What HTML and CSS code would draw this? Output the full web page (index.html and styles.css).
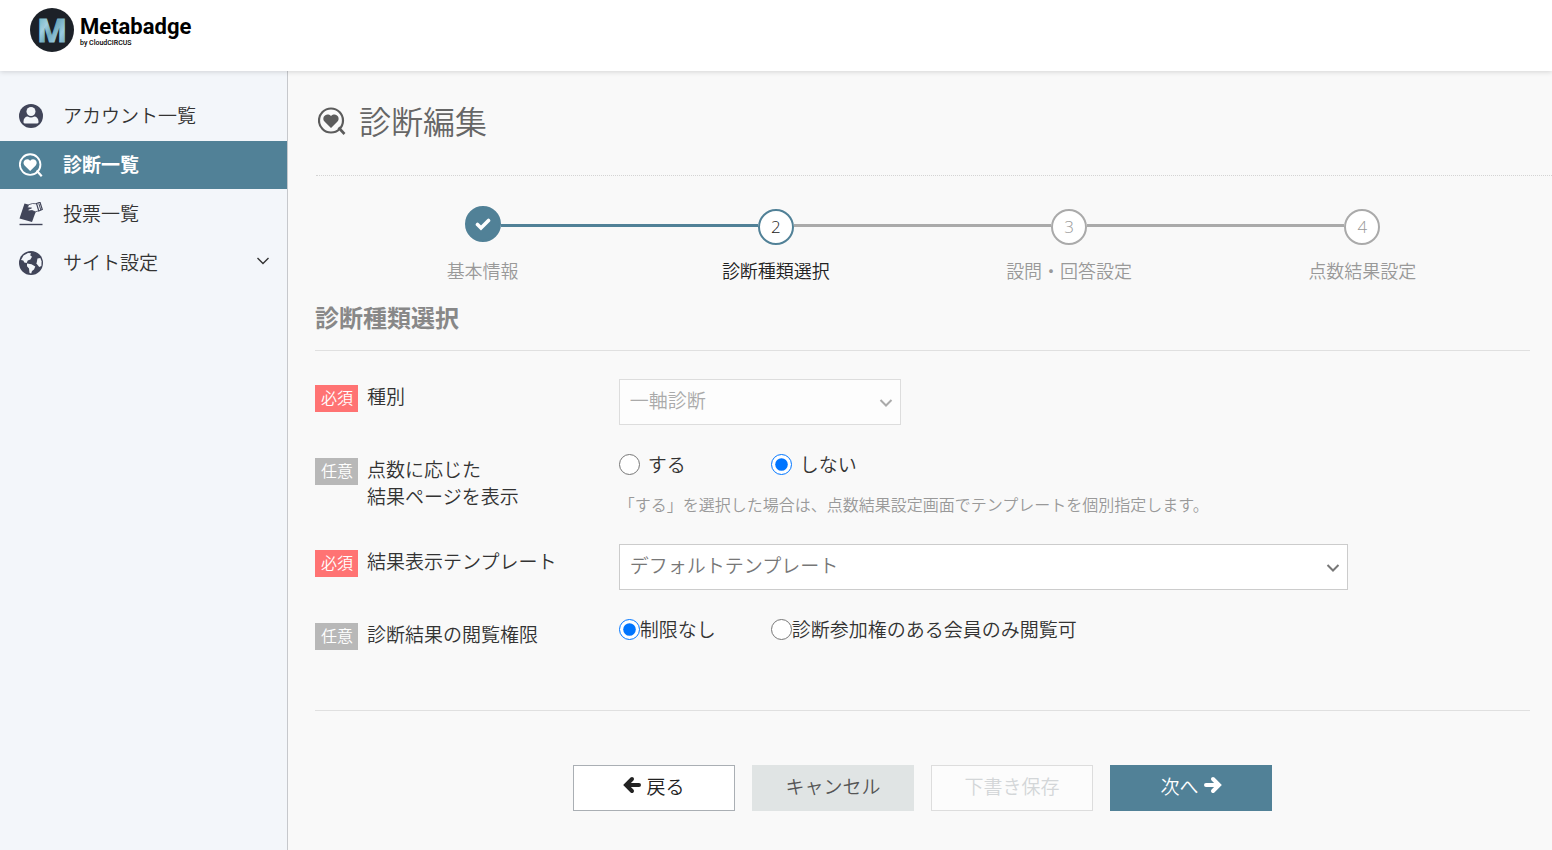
FILE: index.html
```html
<!DOCTYPE html>
<html lang="ja">
<head>
<meta charset="utf-8">
<title>診断編集 | Metabadge</title>
<link rel="stylesheet" href="styles.css">
</head>
<body>
<svg class="sprite" aria-hidden="true">
  <symbol id="icon-heart" viewBox="0 0 28 28">
    <circle cx="13" cy="13.500" r="12" fill="none" stroke="currentColor" stroke-width="2.200"/>
    <path d="M20.500 20.500l6 6.500" stroke="currentColor" stroke-width="2.600"/>
    <path d="M13 21l-6.500-6.500c-3.600-4.200 2-9.800 6.500-5.600 4.500-4.200 10.100 1.400 6.500 5.600z" fill="currentColor"/>
  </symbol>
  <symbol id="icon-chevron" viewBox="0 0 14 10">
    <path d="M1.500 2l5.500 5.500L12.500 2" fill="none" stroke="currentColor"/>
  </symbol>
  <symbol id="icon-arrow" viewBox="0 0 18 18">
    <path d="M2 9H14.500M9 3l6 6-6 6" fill="none" stroke="currentColor" stroke-width="4" stroke-linecap="round"/>
  </symbol>
</svg>

<header class="header">
  <a class="brand" href="#">
    <svg class="brand-mark" viewBox="0 0 44 44" aria-hidden="true">
      <defs>
        <linearGradient id="facet" x1="0" y1="0" x2="1" y2="1">
          <stop offset="0" stop-color="#5a97a0"/>
          <stop offset=".2" stop-color="#7fbccb"/>
          <stop offset=".35" stop-color="#a3cfdf"/>
          <stop offset=".5" stop-color="#6fa9bd"/>
          <stop offset=".7" stop-color="#9acbe0"/>
          <stop offset="1" stop-color="#5f93ad"/>
        </linearGradient>
      </defs>
      <circle cx="22" cy="22" r="22" fill="#1c2128"/>
      <text x="22" y="34" text-anchor="middle" class="brand-letter" fill="url(#facet)" stroke="url(#facet)">M</text>
    </svg>
    <span class="brand-text">
      <span class="brand-name">Metabadge</span>
      <span class="brand-by">by CloudCIRCUS</span>
    </span>
  </a>
</header>

<div class="layout">
  <nav class="sidebar">
    <a class="nav-item" href="#">
      <svg class="nav-icon" viewBox="0 0 24 24"><circle cx="12" cy="12" r="12" fill="currentColor"/><circle cx="12" cy="7.500" r="4.500" fill="#f3f6fa"/><path d="M4.500 18.500v-1c0-3 1.800-5 4.200-5 2 1.200 4.600 1.200 6.600 0 2.400 0 4.200 2 4.200 5v1q-.3 1-1.500 1h-12q-1.200 0-1.500-1z" fill="#f3f6fa"/></svg>
      <span>アカウント一覧</span>
    </a>
    <a class="nav-item nav-item-active" href="#" aria-current="page">
      <svg class="nav-icon"><use href="#icon-heart"/></svg>
      <span>診断一覧</span>
    </a>
    <a class="nav-item" href="#">
      <svg class="nav-icon" viewBox="0 0 24 24"><path d="M5.500 1.500l13 3.500-5.500 15L.5 16.500z" fill="currentColor"/><path d="M9.500 2.800l4-1.300 4.500.3 2 6.800-3.500 1.200-3.500-1.300-3.500.4-.5-1.400 3.500-1.500-4-.3z" fill="#f3f6fa" stroke="currentColor" stroke-width=".8"/><path d="M17.500 1.500l3.500-1.200 2.300 7.200-3.500 1.500z" fill="#f3f6fa" stroke="currentColor" stroke-width="1.200"/><path d="M19.800 1.500l2 6.500" stroke="currentColor"/><path d="M.5 22.500h23" stroke="currentColor" stroke-width="1.400"/></svg>
      <span>投票一覧</span>
    </a>
    <a class="nav-item" href="#">
      <svg class="nav-icon" viewBox="0 0 24 24"><circle cx="12" cy="12" r="12" fill="currentColor"/><path d="M2 9l2.500-4.500L9 2l3 .2-.8 2 1.800 1.600-1.600 2.600-2.700 1.200-1 2.400-2.400-.6-1-1.800z" fill="#f3f6fa"/><path d="M8 12.500l4.500.8 3.800 2.200-1.300 3-2 1.500-.8 2.500-1.700-.6-.5-4.300-2-2.300z" fill="#f3f6fa"/><path d="M18.500 7.500l2.800-.6 1.300 3.600-.2 4.500-2.200 1-2.700-3.500z" fill="#f3f6fa"/></svg>
      <span>サイト設定</span>
      <svg class="nav-chevron"><use href="#icon-chevron"/></svg>
    </a>
  </nav>

  <main class="main">
    <div class="page-head">
      <svg class="page-icon"><use href="#icon-heart"/></svg>
      <h1 class="page-title">診断編集</h1>
    </div>

    <form class="content">
      <ol class="steps">
        <li class="step step-done">
          <div class="step-track"><i class="line line-none"></i><span class="dot"><svg class="check" viewBox="0 0 16 14"><path d="M2.500 7.500l3.500 3.500 7.500-7.500" fill="none" stroke="currentColor" stroke-width="3.600" stroke-linecap="round"/></svg></span><i class="line line-on"></i></div>
          <span class="step-label">基本情報</span>
        </li>
        <li class="step step-current" aria-current="step">
          <div class="step-track"><i class="line line-on"></i><span class="dot">2</span><i class="line"></i></div>
          <span class="step-label">診断種類選択</span>
        </li>
        <li class="step">
          <div class="step-track"><i class="line"></i><span class="dot">3</span><i class="line"></i></div>
          <span class="step-label">設問・回答設定</span>
        </li>
        <li class="step">
          <div class="step-track"><i class="line"></i><span class="dot">4</span><i class="line line-none"></i></div>
          <span class="step-label">点数結果設定</span>
        </li>
      </ol>

      <h2 class="section-title">診断種類選択</h2>

      <div class="rows">
        <div class="row">
          <div class="row-head"><span class="badge badge-required">必須</span><label for="kind">種別</label></div>
          <div class="select-wrap select-short select-disabled">
            <select id="kind" class="select" disabled><option>一軸診断</option></select>
            <svg class="select-chevron"><use href="#icon-chevron"/></svg>
          </div>
        </div>
        <div class="row">
          <div class="row-head"><span class="badge">任意</span><span id="page-label">点数に応じた<br>結果ページを表示</span></div>
          <div role="radiogroup" aria-labelledby="page-label">
            <div class="radios radios-spaced">
              <label class="radio"><input type="radio" name="page"><span>する</span></label>
              <label class="radio"><input type="radio" name="page" checked><span>しない</span></label>
            </div>
            <p class="note">「する」を選択した場合は、点数結果設定画面でテンプレートを個別指定します。</p>
          </div>
        </div>
        <div class="row">
          <div class="row-head"><span class="badge badge-required">必須</span><label for="template">結果表示テンプレート</label></div>
          <div class="select-wrap select-long">
            <select id="template" class="select"><option>デフォルトテンプレート</option></select>
            <svg class="select-chevron"><use href="#icon-chevron"/></svg>
          </div>
        </div>
        <div class="row">
          <div class="row-head"><span class="badge">任意</span><span id="view-label">診断結果の閲覧権限</span></div>
          <div class="radios" role="radiogroup" aria-labelledby="view-label">
            <label class="radio"><input type="radio" name="view" checked><span>制限なし</span></label>
            <label class="radio"><input type="radio" name="view"><span>診断参加権のある会員のみ閲覧可</span></label>
          </div>
        </div>
      </div>

      <div class="actions">
        <button type="button" class="btn btn-back"><svg class="arrow arrow-left"><use href="#icon-arrow"/></svg>戻る</button>
        <button type="button" class="btn btn-cancel">キャンセル</button>
        <button type="button" class="btn btn-draft" disabled>下書き保存</button>
        <button type="button" class="btn btn-next">次へ<svg class="arrow"><use href="#icon-arrow"/></svg></button>
      </div>
    </form>
  </main>
</div>
</body>
</html>
```
FILE: styles.css
```css
* { box-sizing: border-box; }

body {
  margin: 0;
  min-height: 100vh;
  display: flex;
  flex-direction: column;
  background: #f9f9f9;
  color: #333;
  font-family: "Noto Sans CJK JP", sans-serif;
  font-size: 19px;
  font-weight: 350;
  line-height: 27px;
}

.sprite { position: absolute; width: 0; height: 0; }

.header {
  position: relative;
  display: flex;
  align-items: flex-start;
  height: 71px;
  padding: 8px 30px;
  background: #fff;
  box-shadow: 0 1px 5px rgba(0, 0, 0, .15);
}
.brand { display: flex; align-items: center; gap: 6px; color: #000; text-decoration: none; }
.brand-mark { width: 44px; height: 44px; }
.brand-letter { font: 700 32px "Noto Sans", sans-serif; stroke-width: 1px; }
.brand-text { display: flex; flex-direction: column; padding-top: 2px; }
.brand-name { font: 700 22px/24px Roboto, sans-serif; }
.brand-by { font: 500 7px/8px Roboto, sans-serif; }

.layout { flex: 1; display: flex; }

.sidebar {
  flex: 0 0 288px;
  display: flex;
  flex-direction: column;
  gap: 1px;
  padding-top: 21px;
  background: #f3f6fa;
  border-right: 1px solid #c6c8cc;
}
.nav-item {
  display: flex;
  align-items: center;
  gap: 20px;
  height: 48px;
  padding: 0 17px 4px 19px;
  color: #333;
  text-decoration: none;
}
.nav-icon { width: 24px; height: 24px; margin-top: 4px; color: #414559; }
.nav-item-active { background: #518197; color: #fff; font-weight: 700; }
.nav-item-active .nav-icon { color: #fff; }
.nav-chevron { width: 14px; height: 10px; margin-left: auto; stroke-width: 1.4px; }

.main { flex: 1; min-width: 0; padding-left: 28px; }
.page-head {
  display: flex;
  align-items: center;
  gap: 13px;
  height: 105px;
  padding: 0 2px 6px;
  border-bottom: 1px dotted #d4d4d4;
  color: #666;
}
.page-icon { width: 28px; height: 28px; margin-top: 2px; color: #5c5c5c; }
.page-title { margin: 0; font-size: 32px; font-weight: 350; line-height: 48px; }

.content { margin: 0 22px 0 -1px; }

.steps { display: flex; margin: 0; padding: 30px 21px 0; list-style: none; }
.step { flex: 1; text-align: center; color: #999; font-size: 18px; }
.step-track { display: flex; align-items: center; height: 39px; }
.line { flex: 1; height: 3px; background: #aaa; }
.line-on { background: #518197; }
.line-none { background: none; }
.dot {
  align-self: flex-end;
  display: flex;
  align-items: center;
  justify-content: center;
  width: 36px;
  height: 36px;
  padding-bottom: 2px;
  border: 2px solid #aaa;
  border-radius: 50%;
  background: #fff;
  font-family: "Open Sans", sans-serif;
  font-size: 17px;
}
.step-done .dot { align-self: flex-start; padding: 0; border-color: #518197; background: #518197; color: #fff; }
.check { width: 16px; height: 14px; }
.step-current { color: #222; }
.step-current .dot { border-color: #518197; }
.step-label { display: block; margin-top: 12px; }

.section-title {
  margin: 15px 0 28px;
  padding-bottom: 15px;
  border-bottom: 1px solid #e0e0e0;
  color: #888;
  font-size: 24px;
  font-weight: 700;
  line-height: 36px;
}

.rows { display: grid; gap: 27px; padding-bottom: 60px; border-bottom: 1px solid #e0e0e0; }
.row { display: grid; grid-template-columns: 1fr 3fr; }
.row-head { display: flex; align-items: flex-start; gap: 9px; padding-top: 3px; }
.badge {
  margin-top: 3px;
  padding: 0 5px 2px 6px;
  background: #b8b8b8;
  color: #fff;
  font-size: 16px;
  line-height: 25px;
}
.badge-required { background: #ff7373; }

.select-wrap { position: relative; height: 46px; }
.select-short { width: 31%; }
.select-long { width: 80%; }
.select {
  width: 100%;
  height: 100%;
  padding: 0 10px 5px;
  appearance: none;
  border: 1px solid #ccc;
  border-radius: 0;
  background: #fff;
  color: #777;
  font: inherit;
  opacity: 1;
}
.select-disabled .select { border-color: #ddd; background: #fdfdfd; color: #aaa; }
.select-chevron {
  position: absolute;
  right: 8px;
  top: 19px;
  width: 14px;
  height: 10px;
  color: #777;
  stroke-width: 2px;
  pointer-events: none;
}
.select-disabled .select-chevron { color: #aaa; }

.radios { display: grid; grid-template-columns: 152px 1fr; height: 25px; }
.radio { display: flex; align-items: center; line-height: 23px; }
.radio span { padding-bottom: 2px; }
.radio input { width: 21px; height: 21px; margin: 0; }
.radios-spaced .radio { gap: 8px; }
.note { margin: 14px 0 0; color: #999; font-size: 16px; line-height: 26px; }

.actions { display: flex; justify-content: center; gap: 17px; padding: 54px 0 40px; }
.btn {
  display: flex;
  align-items: center;
  justify-content: center;
  gap: 5px;
  width: 162px;
  height: 46px;
  padding: 0 0 6px;
  border: 1px solid transparent;
  font: inherit;
}
.btn-back { border-color: #aaafb4; background: #fff; color: #222; }
.btn-cancel { background: #e0e4e4; color: #555; }
.btn-draft { border-color: #ddd; background: #fcfcfc; color: #d3d6d8; }
.btn-next { background: #518197; color: #fff; }
.arrow { width: 18px; height: 18px; }
.arrow-left { transform: rotate(180deg); }
```
